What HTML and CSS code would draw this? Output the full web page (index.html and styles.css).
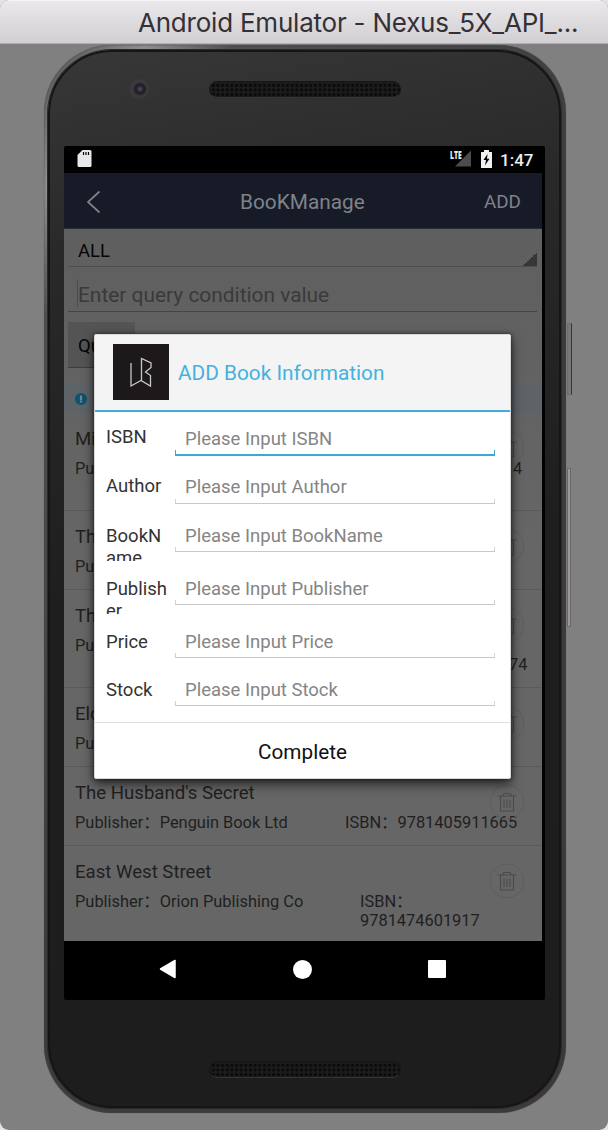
FILE: index.html
```html
<!DOCTYPE html>
<html lang="zh-CN">
<head>
<meta charset="utf-8">
<title>Android Emulator</title>
<link rel="stylesheet" href="styles.css">
</head>
<body>
<svg class="defs" width="0" height="0">
  <symbol id="trash" viewBox="0 0 36 36">
    <circle cx="18" cy="18" r="16.8" fill="none" stroke="#5e5e5e" stroke-width="1"/>
    <g fill="none" stroke="#4a4a4a" stroke-width="1.1"><path d="M8.500 12h19M13.500 11.700L15 9.500h6l1.500 2.200M11.500 12.500v14.500h13V12.500M15 15.500v8.500M18 15.500v8.500M21 15.500v8.500"/></g>
  </symbol>
</svg>
<div class="window">
  <header class="titlebar"><span>Android Emulator - Nexus_5X_API_...</span></header>
  <div class="stage">
    <div class="phone">
      <div class="face">
        <div class="top-bezel">
          <i class="camera"></i>
          <i class="speaker"></i>
        </div>
        <div class="screen">
          <div class="status">
            <svg class="sd" width="15" height="18" viewBox="0 0 15 18"><path d="M5.500 0H13q1.500 0 1.500 1.500v14Q14.500 17 13 17H2Q.5 17 .5 15.500V5z" fill="#e8e8e8"/><path d="M6.500 2v3M9 2v3M11.500 2v3" stroke="#000" stroke-width="1.200"/></svg>
            <span class="lte">LTE</span>
            <svg class="signal" width="17" height="17" viewBox="0 0 17 17"><path d="M17 0v17H0z" fill="#4c4c4c"/></svg>
            <svg class="battery" width="11" height="18" viewBox="0 0 11 18"><path d="M3 0h5v2h3v16H0V2h3z" fill="#f1f1f1"/><path d="M6.500 4L2.500 10h2.500L4 15.500 8.500 8.800H6z" fill="#000"/></svg>
            <span class="time">1:47</span>
          </div>
          <div class="navbar">
            <svg width="15" height="24" viewBox="0 0 15 24"><path d="M13.500 1.500L2 12l11.500 10.500" fill="none" stroke="#808289" stroke-width="1.700"/></svg>
            <span class="nav-title">BooKManage</span>
            <span class="nav-add">ADD</span>
          </div>
          <div class="content">
            <div class="select"><span>ALL</span><i></i></div>
            <div class="query-input"><span>Enter query condition value</span></div>
            <div class="query-button">Qu</div>
            <div class="notice"><svg width="12" height="12" viewBox="0 0 12 12"><circle cx="6" cy="6" r="6" fill="#0f526d"/><path d="M6 2.500v4.500M6 7.500v2" stroke="#77858b" stroke-width="2.200"/></svg></div>
            <div class="book tall">
              <h3>Mi</h3>
              <div class="meta"><span>Pu</span><span class="isbn end1">4</span></div>
              <svg class="trash"><use href="#trash"/></svg>
            </div>
            <div class="book">
              <h3>Th</h3>
              <div class="meta"><span>Pu</span></div>
              <svg class="trash"><use href="#trash"/></svg>
            </div>
            <div class="book tall">
              <h3>Th</h3>
              <div class="meta"><span>Pu</span><span class="isbn end2">74</span></div>
              <svg class="trash"><use href="#trash"/></svg>
            </div>
            <div class="book">
              <h3>Eld</h3>
              <div class="meta"><span>Pu</span></div>
              <svg class="trash"><use href="#trash"/></svg>
            </div>
            <div class="book">
              <h3>The Husband's Secret</h3>
              <div class="meta"><span>Publisher：Penguin Book Ltd</span><span class="isbn one">ISBN：9781405911665</span></div>
              <svg class="trash"><use href="#trash"/></svg>
            </div>
            <div class="book last">
              <h3>East West Street</h3>
              <div class="meta"><span>Publisher：Orion Publishing Co</span><span class="isbn two">ISBN：<br>9781474601917</span></div>
              <svg class="trash"><use href="#trash"/></svg>
            </div>
          </div>
          <div class="keys">
            <svg width="20" height="22" viewBox="0 0 20 22"><path d="M17 2.500v17L2.500 11z" fill="#fff" stroke="#fff" stroke-width="1.500" stroke-linejoin="round"/></svg>
            <i class="home"></i>
            <i class="recent"></i>
          </div>
          <section class="dialog">
            <div class="dialog-head">
              <svg width="56" height="56" viewBox="0 0 56 56"><path fill="#1d191a" d="M0 0h56v56H0z"/><path d="M18 19v23l10-5.500 9.500 5.500V31.500L32.500 28l5.500-4.500V19l-9.500-4.500v22" fill="none" stroke="#c9c7c7" stroke-width="1.300"/></svg>
              <h2>ADD Book Information</h2>
            </div>
            <div class="form">
              <div class="field focus"><label>ISBN</label><div class="input">Please Input ISBN</div></div>
              <div class="field author"><label>Author</label><div class="input">Please Input Author</div></div>
              <div class="field"><label>BookName</label><div class="input">Please Input BookName</div></div>
              <div class="field mid"><label>Publisher</label><div class="input">Please Input Publisher</div></div>
              <div class="field mid"><label>Price</label><div class="input">Please Input Price</div></div>
              <div class="field stock"><label>Stock</label><div class="input">Please Input Stock</div></div>
            </div>
            <div class="complete">Complete</div>
          </section>
        </div>
        <div class="bottom-bezel"><i class="speaker"></i></div>
      </div>
      <i class="side power"></i>
      <i class="side volume"></i>
    </div>
  </div>
</div>
</body>
</html>
```
FILE: styles.css
```css
* { box-sizing: border-box; }
body { margin: 0; background: #e4e4e4; font-family: Roboto, "Noto Sans CJK SC", sans-serif; }
h2, h3 { margin: 0; font-weight: 400; }
i { display: block; }
svg { display: block; flex: none; }
.defs { position: absolute; }

.window { width: 608px; height: 1130px; border-radius: 9px; overflow: hidden; background: #808080; }
.titlebar { height: 44px; padding-left: 138px; background: linear-gradient(#ebe8ec, #d2cfd3); border-top: 1px solid #f5f3f5; border-bottom: 1px solid #b2afb2; color: #333136; font: 400 26px/44px Inter, sans-serif; white-space: nowrap; }
.titlebar span { letter-spacing: -0.22px; }
.stage { padding: 1px 0 0 44px; }

/* handset */
.phone { position: relative; width: 522px; height: 1068px; padding: 5px 5px 5px 4px; border-radius: 68px; background: linear-gradient(125deg, #4b4b4c 0, #909090 8%, #505051 15%, #3d3c3d 50%, #3d393b 100%); box-shadow: inset 0 0 2px #444, 0 0 1px #555; }
.face { height: 1058px; padding: 0 0 0 14px; border: 2px solid #151416; border-radius: 64px; background: linear-gradient(170deg, #373738 0, #29292a 18%, #1e1e1f 50%, #1d1d1e 100%); box-shadow: 0 0 0 1px #2a292b; }
.top-bezel { display: flex; height: 94px; padding: 27px 0 0 65px; gap: 60px; }
.camera { width: 20px; height: 20px; border-radius: 50%; background: radial-gradient(circle at 11px 10px, #4b4453 0 1px, #2a2430 3px, #211e25 5px, #3a393b 7px); }
.speaker { width: 192px; height: 17px; margin-top: 2px; border-radius: 9px; background: radial-gradient(circle, #070707 .9px, transparent 1.700px) 1px 1px / 4.650px 4.650px, #1b1b1c; border: 1px solid #171718; border-bottom-color: #343435; }
.bottom-bezel { padding: 59px 0 0 145px; }
.side { position: absolute; left: 523px; border: 1px solid #716c6e; border-right: 1px solid #393537; background: #777; }
.power { top: 278px; width: 5px; height: 72px; }
.volume { top: 423px; width: 4px; height: 159px; border-color: #716c6e #6c6668; background: #999; }

.screen { position: relative; width: 481px; height: 854px; background: #000; border-radius: 2px; }
.status { display: flex; height: 27px; padding: 4px 0 0 13px; color: #eee; }
.lte { margin-left: 358px; font: 800 10px/10px "Open Sans", sans-serif; transform: scaleX(.68); transform-origin: left; width: 5px; height: 10px; }
.signal { width: 16px; height: 17px; }
.battery { margin-left: 10px; }
.time { margin-left: 8px; font-size: 17px; font-weight: 500; line-height: 20px; }
.navbar { display: grid; grid-template-columns: 154px 1fr 58px; align-items: center; width: 478px; height: 56px; padding: 2px 0 0 22px; background: #171b28; border-bottom: 1px solid #292b37; color: #808289; }
.nav-title { font-size: 20.800px; }
.nav-add { font-size: 18.800px; }

.content { width: 478px; height: 712px; overflow: hidden; background: linear-gradient(#5f5f5f, #666 45%); color: #1f1f1f; }
.select { display: flex; justify-content: space-between; align-items: flex-end; height: 38px; margin: 0 5px 0 4px; padding-left: 10px; border-bottom: 1px solid #4e4e4e; color: #050505; font-size: 18.500px; line-height: 30px; }
.select i { width: 14px; height: 14px; background: linear-gradient(135deg, transparent 50%, #363636 50%); }
.query-input { height: 45px; margin: 0 5px 0 4px; padding: 12px 0 0 9px; border-bottom: 1px solid #454545; color: #3a3a3a; font-size: 20.900px; line-height: 32px; }
.query-input span { display: block; height: 28px; border-left: 1px solid #4c4c4c; }
.query-button { width: 67px; height: 46px; margin: 10px 0 0 4px; padding-left: 10px; overflow: hidden; background: #545454; border-bottom: 1px solid #3d3d3d; color: #050505; font-size: 18.500px; line-height: 48px; }
.notice { height: 30px; margin-top: 15px; padding: 10px 0 0 11px; background: #5d6366; }
.book { position: relative; height: 79px; padding: 15px 0 0 11px; border-bottom: 1px solid #5a5a5a; white-space: nowrap; }
.book.tall { height: 98px; }
.book.last { border: 0; }
.book h3 { font-size: 18.600px; line-height: 22px; }
.meta { position: relative; margin-top: 9px; font-size: 16.400px; line-height: 19px; }
.isbn { position: absolute; top: 0; }
.one { left: 270px; }
.two { left: 285px; }
.end1 { left: 438px; }
.end2 { left: 434px; top: 19px; }
.trash { position: absolute; left: 425px; top: 17px; width: 36px; height: 36px; }

.keys { display: flex; align-items: center; height: 59px; padding: 0 0 3px 94px; }
.home { width: 19px; height: 19px; margin-left: 115px; border-radius: 50%; background: #fff; }
.recent { width: 18px; height: 18px; margin-left: 116px; border-radius: 1px; background: #fff; }

/* modal form */
.dialog { position: absolute; left: 30px; top: 188px; width: 417px; height: 445px; border-radius: 2px; overflow: hidden; background: #fff; border: 1px solid #d8d8d8; box-shadow: 0 5px 12px rgba(0,0,0,.65), 0 0 4px rgba(0,0,0,.5); }
.dialog-head { display: flex; gap: 9px; height: 77px; padding: 9px 0 0 18px; background: #f4f4f4; border-bottom: 2px solid #42addb; }
.dialog-head h2 { color: #43b2df; font-size: 20.800px; line-height: 58px; }
.form { height: 311px; padding: 0 15px 0 11px; border-bottom: 1px solid #dedede; }
.field { display: grid; grid-template-columns: 69px 320px; align-items: end; height: 48px; color: #333; font-size: 18.500px; }
.field label { height: 36px; overflow: hidden; overflow-wrap: anywhere; width: 62px; line-height: 22px; margin-bottom: -9px; }
.focus { height: 44px; }
.focus label { margin-bottom: -6px; }
.author label { margin-bottom: -7px; }
.mid { height: 53px; }
.stock { height: 48px; }
.input { position: relative; height: 32px; padding-left: 10px; border-bottom: 1px solid #c8c8c8; color: #858585; line-height: 32px; white-space: nowrap; }
.focus .input, .author .input { line-height: 31px; }
.input::before { content: ""; position: absolute; left: 0; right: 0; bottom: 0; height: 4px; border: solid #d3d3d3; border-width: 0 1px; }
.focus .input { border-bottom: 2px solid #3ba9d7; }
.focus .input::before { border-color: #3ba9d7; }
.complete { color: #111; font-size: 20.700px; line-height: 59px; text-align: center; }
```
